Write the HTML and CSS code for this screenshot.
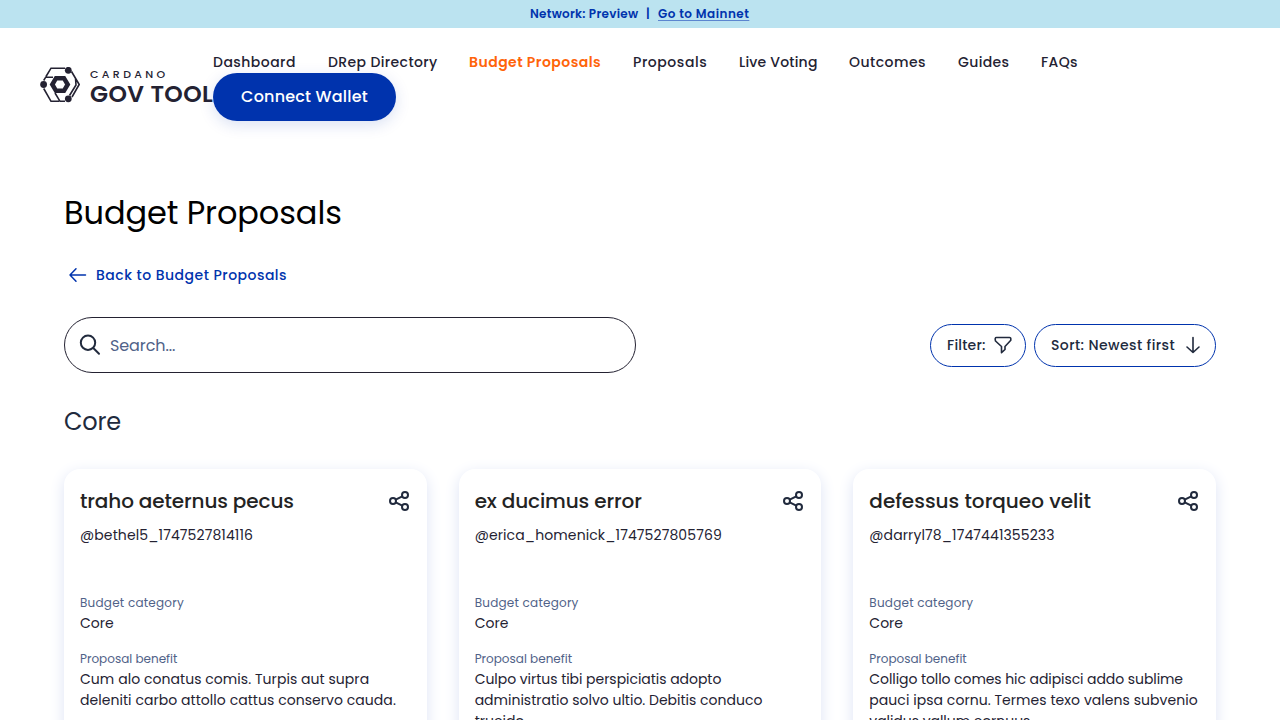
FILE: index.html
```html
<!DOCTYPE html>
<html lang="en">
<head>
<meta charset="utf-8">
<title>Budget Proposals</title>
<link rel="stylesheet" href="styles.css">
</head>
<body>
<div class="banner"><span class="net">Network: Preview</span><span class="bar">|</span><a class="mainnet">Go to Mainnet</a></div>
<header class="header">
  <div class="logo">
    <svg class="mark" width="40" height="36" viewBox="0 0 40 36" fill="none" stroke="#242232" stroke-width="1.6">
      <path d="M6 9.500 11 1.200H25M3.700 13.500 5.700 10.200H13M31.500 4.500 39.200 17.500 32 30M35.500 11 36 18 29.500 28.500M3.700 21.500 11 34.300H19M15 26 20 34.300H25"/>
      <path d="M15.800 10.800h8.400l4 6.700-4 6.700H15.800L11.800 17.500z" transform="translate(20 17.500) scale(.94) translate(-20 -17.500)" stroke-width="4.800"/>
      <g fill="#242232" stroke="none"><circle cx="28.300" cy="3.300" r="3.400"/><circle cx="3.600" cy="17.500" r="3.400"/><circle cx="28.300" cy="31.800" r="3.400"/></g>
    </svg>
    <div class="words"><span class="cardano">CARDANO</span><span class="gov">GOV TOOL</span></div>
  </div>
  <div class="menu">
    <nav class="nav"><a class="n1">Dashboard</a><a class="n2">DRep Directory</a><a class="n3 active">Budget Proposals</a><a class="n4">Proposals</a><a class="n5">Live Voting</a><a class="n6">Outcomes</a><a class="n7">Guides</a><a class="n8">FAQs</a></nav>
    <button class="connect"><span>Connect Wallet</span></button>
  </div>
</header>
<main class="main">
  <h1 class="title"><span>Budget Proposals</span></h1>
  <a class="back"><svg width="24" height="24" viewBox="0 0 24 24" fill="none" stroke="#0033ad" stroke-width="1.500" stroke-linecap="round" stroke-linejoin="round"><path d="M21.500 12H6M12 5.800 6 12 12 18.200"/></svg><span>Back to Budget Proposals</span></a>
  <div class="tools">
    <div class="search"><svg width="24" height="24" viewBox="0 0 24 24" fill="none" stroke="#212a3d" stroke-width="2" stroke-linecap="round"><circle cx="10" cy="9.700" r="7.200"/><path d="m15.500 15.200 5.500 5.500"/></svg><span>Search...</span></div>
    <div class="buttons">
      <button class="pill filter"><span>Filter:</span><svg width="18" height="18" viewBox="0 0 18 18" fill="none" stroke="#212a3d" stroke-width="1.600" stroke-linejoin="round"><path d="M2.500 1.500h13q1.500 0 1.300 1.700v1L11 10.500v3L7.500 16.700V10.500L1.500 5Q.5 1.500 2.500 1.500z"/></svg></button>
      <button class="pill sort"><span>Sort: Newest first</span><svg width="18" height="18" viewBox="0 0 18 18" fill="none" stroke="#212a3d" stroke-width="1.600" stroke-linecap="round" stroke-linejoin="round"><path d="M9 1.500v15M3 11l6 5.500 6-5.500"/></svg></button>
    </div>
  </div>
  <h2 class="section"><span>Core</span></h2>
  <div class="cards">
    <article class="card">
      <div class="head"><h3 class="snug">traho aeternus pecus</h3><svg class="share" width="24" height="24" viewBox="0 0 24 24" fill="none" stroke="#212a3d" stroke-width="2"><circle cx="18" cy="6" r="3"/><circle cx="6" cy="12" r="3"/><circle cx="18" cy="18" r="3"/><path d="m8.700 10.700 6.600-3.300M8.700 13.300l6.600 3.300"/></svg></div>
      <p class="user">@bethel5_1747527814116</p>
      <p class="label cat">Budget category</p><p class="value">Core</p>
      <p class="label ben">Proposal benefit</p><p class="value"><span class="loose">Cum alo conatus comis. Turpis aut supra</span><br><span class="loose">deleniti carbo attollo cattus conservo cauda.</span></p>
    </article>
    <article class="card">
      <div class="head"><h3 class="snug">ex ducimus error</h3><svg class="share" width="24" height="24" viewBox="0 0 24 24" fill="none" stroke="#212a3d" stroke-width="2"><circle cx="18" cy="6" r="3"/><circle cx="6" cy="12" r="3"/><circle cx="18" cy="18" r="3"/><path d="m8.700 10.700 6.600-3.300M8.700 13.300l6.600 3.300"/></svg></div>
      <p class="user">@erica_homenick_1747527805769</p>
      <p class="label cat">Budget category</p><p class="value">Core</p>
      <p class="label ben">Proposal benefit</p><p class="value"><span class="tight">Culpo virtus tibi perspiciatis adopto</span><br><span>administratio solvo ultio. Debitis conduco</span><br><span>trucido.</span></p>
    </article>
    <article class="card">
      <div class="head"><h3>defessus torqueo velit</h3><svg class="share" width="24" height="24" viewBox="0 0 24 24" fill="none" stroke="#212a3d" stroke-width="2"><circle cx="18" cy="6" r="3"/><circle cx="6" cy="12" r="3"/><circle cx="18" cy="18" r="3"/><path d="m8.700 10.700 6.600-3.300M8.700 13.300l6.600 3.300"/></svg></div>
      <p class="user">@darryl78_1747441355233</p>
      <p class="label cat">Budget category</p><p class="value">Core</p>
      <p class="label ben">Proposal benefit</p><p class="value"><span class="tighter">Colligo tollo comes hic adipisci addo sublime</span><br><span class="loose">pauci ipsa cornu. Termes texo valens subvenio</span><br><span class="tight">validus vallum cornuus.</span></p>
    </article>
  </div>
</main>
</body>
</html>
```
FILE: styles.css
```css
* { box-sizing: border-box; margin: 0; padding: 0; }
html, body { height: 720px; overflow: hidden; }
body { background: #fff; color: #242232; font-family: Poppins, Inter, "Liberation Sans", sans-serif; font-size: 14px; display: flex; flex-direction: column; }
svg { display: block; flex: none; }
button { font: inherit; background: none; border: 0; }
h1, h2, h3 { font-weight: 400; }
.banner { flex: none; height: 28px; background: #bbe3f0; color: #0033ad; font-size: 12px; font-weight: 600; line-height: 28px; display: flex; padding-left: 530px; white-space: pre; }
.net { width: 116px; letter-spacing: .26px; }
.bar { width: 12px; }
.mainnet { letter-spacing: .48px; text-decoration: underline; text-decoration-color: #5c85cf; text-underline-offset: 2px; text-decoration-thickness: 1px; }
.header { flex: none; height: 116px; display: flex; padding: 24px 0 0 40px; }
.logo { width: 173px; display: flex; gap: 10px; padding-top: 15px; white-space: nowrap; }
.words { display: flex; flex-direction: column; margin-top: -1px; }
.cardano { font-size: 11px; line-height: 17px; letter-spacing: 3.35px; font-weight: 500; }
.gov { font-size: 23.500px; letter-spacing: .4px; line-height: 21px; font-weight: 600; }
.nav { height: 21px; line-height: 21px; font-weight: 500; display: grid; grid-template-columns: 115px 141px 164px 106px 110px 109px 83px 40px; white-space: nowrap; }
.menu { position: relative; }
.n1, .n3, .n6 { letter-spacing: .46px; }
.n2 { letter-spacing: .38px; }
.n4 { letter-spacing: .56px; }
.n5 { letter-spacing: .2px; }
.n7, .n8 { letter-spacing: .36px; }
.active { color: #ff640a; font-weight: 600; }
.connect { width: 183px; height: 48px; padding-bottom: 1px; border-radius: 24px; background: #0033ad; color: #fff; font-size: 16px; font-weight: 500; letter-spacing: .2px; box-shadow: 0 4px 15px rgba(0, 51, 173, .15); }
.main { flex: 1; min-height: 0; overflow: hidden; padding: 44px 64px 0; }
.title { color: #000; font-size: 32px; letter-spacing: -.1px; line-height: 50px; }
.back { display: flex; gap: 8px; align-items: center; height: 24px; margin-top: 25px; color: #0033ad; font-weight: 500; letter-spacing: .48px; }
.tools { display: flex; justify-content: space-between; align-items: center; height: 56px; margin-top: 30px; }
.search { width: 572px; height: 56px; border: 1px solid #242232; border-radius: 28px; display: flex; align-items: center; gap: 8px; padding-left: 13px; font-size: 16px; letter-spacing: -.1px; color: #506288; }
.buttons { display: flex; gap: 8px; }
.pill { height: 43px; border: 1px solid #0033ad; border-radius: 22px; display: flex; align-items: center; justify-content: space-between; padding: 0 13px 0 16px; color: #212a3d; font-weight: 500; white-space: nowrap; }
.filter { width: 96px; letter-spacing: .2px; }
.sort { width: 182px; letter-spacing: .41px; }
.section { font-size: 24px; line-height: 32px; margin-top: 33px; color: #212a3d; letter-spacing: -.2px; }
.cards { display: grid; grid-template-columns: repeat(3, 1fr); gap: 32px; margin-top: 31px; }
.card { height: 400px; border-radius: 16px; padding: 16px; background: #fff; box-shadow: 0 4px 15px #dde3f5; white-space: nowrap; }
.head { display: flex; justify-content: space-between; align-items: center; height: 32px; }
.head h3 { font-size: 20px; font-weight: 500; color: #232323; }
.head .snug { letter-spacing: -.13px; }
.user { line-height: 20px; margin-top: 8px; letter-spacing: .11px; }
.label { font-size: 12px; line-height: 18px; color: #506288; }
.cat { margin-top: 49px; letter-spacing: .23px; }
.ben { margin-top: 17px; }
.value { line-height: 21px; position: relative; top: 1px; }
.loose { letter-spacing: .05px; }
.tight { letter-spacing: -.04px; }
.tighter { letter-spacing: -.08px; }
```
